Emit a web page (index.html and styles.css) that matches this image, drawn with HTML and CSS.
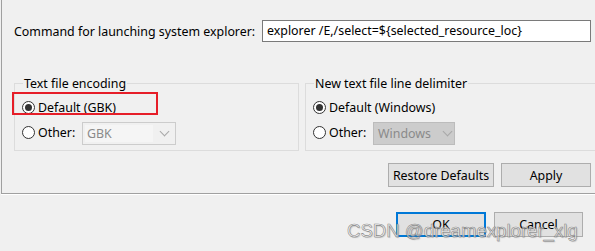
FILE: index.html
```html
<!DOCTYPE html>
<html>
<head>
<meta charset="utf-8">
<link rel="stylesheet" href="styles.css">
</head>
<body>
<div class="panel">
  <div class="cmd-row">
    <span class="cmd-label">Command for launching system explorer:</span>
    <div class="textbox">explorer /E,/select=${selected_resource_loc}</div>
  </div>
  <div class="groups">
    <fieldset class="group group-left">
      <legend>Text file encoding</legend>
      <div class="radio-row">
        <span class="radio checked"></span><span class="rlabel">Default (GBK)</span>
      </div>
      <div class="radio-row">
        <span class="radio"></span><span class="rlabel other">Other:</span>
        <div class="combo combo-light"><span class="combo-text">GBK</span><span class="chev"></span></div>
      </div>
    </fieldset>
    <fieldset class="group group-right">
      <legend>New text file line delimiter</legend>
      <div class="radio-row">
        <span class="radio checked"></span><span class="rlabel">Default (Windows)</span>
      </div>
      <div class="radio-row">
        <span class="radio"></span><span class="rlabel other">Other:</span>
        <div class="combo combo-dark"><span class="combo-text">Windows</span><span class="chev"></span></div>
      </div>
    </fieldset>
  </div>
  <div class="btn-row">
    <button class="btn btn-restore">Restore Defaults</button>
    <button class="btn btn-apply">Apply</button>
  </div>
  <div class="highlight"></div>
</div>
<div class="footer">
  <button class="btn btn-ok">OK</button>
  <button class="btn btn-cancel">Cancel</button>
  <div class="watermark">CSDN @dreamexplorer_xlg</div>
</div>
</body>
</html>
```

FILE: styles.css
```css
html, body {
  margin: 0;
  padding: 0;
  background: #f0f0f0;
  width: 595px;
  height: 251px;
  overflow: hidden;
}
body {
  font-family: "Noto Sans", "Open Sans", sans-serif;
  font-size: 12.4px;
  color: #000;
  position: relative;
}
.panel {
  position: relative;
  margin-left: 1px;
  border-left: 1px solid #a0a0a0;
  border-bottom: 1px solid #a0a0a0;
  box-shadow: 0 1px 0 #ffffff;
  padding: 20px 0 6px 0;
  height: 167px;
}
.cmd-row {
  display: flex;
  align-items: center;
  padding-left: 12px;
  height: 22px;
}
.cmd-label {
  width: 248px;
}
.textbox {
  width: 319px;
  height: 20px;
  border: 1px solid #7a7a7a;
  background: #fff;
  line-height: 20px;
  padding-left: 4px;
  padding-right: 4px;
  white-space: nowrap;
  overflow: hidden;
}
.groups {
  display: flex;
  gap: 6px;
  margin-top: 33px;
  padding-left: 12px;
}
.group {
  margin: 0;
  border: 1px solid #dcdcdc;
  padding: 3px 0 6px 7px;
  height: 65px;
  min-width: 0;
}
.group legend {
  margin-left: 1px;
  padding: 0 1px;
  line-height: 17px;
}
.group-left { width: 276px; }
.group-right { width: 300px; margin-right: -20px; }
.radio-row {
  display: flex;
  align-items: center;
  height: 25px;
}
.radio {
  width: 11px;
  height: 11px;
  border: 1px solid #333;
  border-radius: 50%;
  background: #fff;
  margin-right: 3px;
  position: relative;
  flex: none;
}
.radio.checked::after {
  content: "";
  position: absolute;
  left: 2px;
  top: 2px;
  width: 7px;
  height: 7px;
  border-radius: 50%;
  background: #333;
}
.rlabel.other {
  width: 44px;
}
.combo {
  display: flex;
  align-items: center;
  height: 21px;
  margin-top: 1px;
}
.combo-light {
  width: 92px;
  border: 1px solid #cccccc;
  background: #f0f0f0;
}
.combo-light .combo-text {
  background: #f5f5f5;
  width: 66px;
  margin-left: 2px;
  height: 17px;
  line-height: 17px;
  padding-left: 2px;
  color: #8a8a8a;
}
.combo-dark {
  width: 80px;
  border: 1px solid #bcbcbc;
  background: #cccccc;
}
.combo-dark .combo-text {
  padding-left: 4px;
  width: 58px;
  color: #8a8a8a;
}
.chev {
  width: 6px;
  height: 6px;
  border-right: 1px solid #a8a8a8;
  border-bottom: 1px solid #a8a8a8;
  transform: rotate(45deg);
  margin-left: 8px;
  margin-top: -4px;
}
.btn-row {
  display: flex;
  justify-content: flex-end;
  gap: 7px;
  margin-top: 12px;
  padding-right: 4px;
}
.btn {
  font-family: inherit;
  font-size: 12.4px;
  color: #000;
  background: #e1e1e1;
  border: 1px solid #adadad;
  height: 24px;
  padding: 0;
  margin: 0;
}
.btn-restore { width: 106px; }
.btn-apply { width: 90px; }
.highlight {
  position: absolute;
  left: 10px;
  top: 92px;
  width: 142px;
  height: 19px;
  border: 2px solid #e61e28;
}
.footer {
  position: relative;
  display: flex;
  justify-content: flex-end;
  gap: 8px;
  padding: 18px 12px 0 0;
}
.btn-ok {
  width: 90px;
  height: 25px;
  border: 2px solid #0078d7;
}
.btn-cancel {
  width: 89px;
  height: 25px;
}
.watermark {
  position: absolute;
  left: 347px;
  top: 26px;
  font-family: "Liberation Sans", Arial, sans-serif;
  font-size: 18.6px;
  color: rgba(255, 255, 255, 0.7);
  -webkit-text-stroke: 0.6px rgba(105, 105, 105, 0.8);
  text-shadow: 1px 1px 1px rgba(130, 130, 130, 0.4);
  white-space: nowrap;
  pointer-events: none;
}
```
